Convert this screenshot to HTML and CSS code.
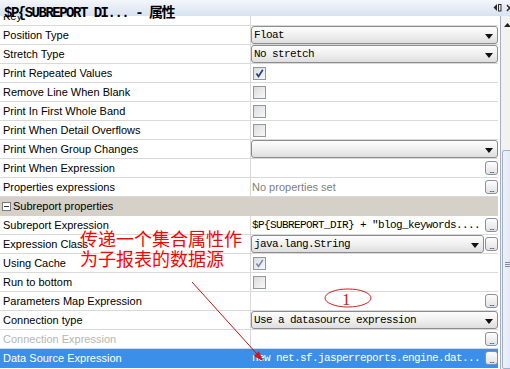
FILE: index.html
```html
<!DOCTYPE html>
<html>
<head>
<meta charset="utf-8">
<link rel="stylesheet" href="styles.css">
</head>
<body>
<div class="panel">
  <div class="titlebar">
    <span class="title">$P{SUBREPORT DI... - 属性</span>
    <svg class="tb-icons" width="20" height="10" viewBox="0 0 20 10">
      <polygon points="4,1 0.5,4.5 4,8" fill="#2b2b2b"/>
      <rect x="5.5" y="1.5" width="2.5" height="6.5" fill="none" stroke="#2b2b2b" stroke-width="1"/>
      <path d="M14 2 L19 8 M19 2 L14 8" stroke="#2b2b2b" stroke-width="1.4"/>
    </svg>
  </div>
  <div class="content">
    <div class="sheet">
      <div class="row"><div class="name">Key</div><div class="val"></div></div>
      <div class="row"><div class="name">Position Type</div><div class="val"><div class="combo"><span class="mono">Float</span><span class="drop"></span></div></div></div>
      <div class="row"><div class="name">Stretch Type</div><div class="val"><div class="combo"><span class="mono">No stretch</span><span class="drop"></span></div></div></div>
      <div class="row"><div class="name">Print Repeated Values</div><div class="val"><span class="cb checked"><svg width="11" height="11" viewBox="0 0 11 11"><path d="M2.5 5.5 L4.5 8.5 L8.8 1.8" fill="none" stroke="#23407d" stroke-width="1.7"/></svg></span></div></div>
      <div class="row"><div class="name">Remove Line When Blank</div><div class="val"><span class="cb"></span></div></div>
      <div class="row"><div class="name">Print In First Whole Band</div><div class="val"><span class="cb"></span></div></div>
      <div class="row"><div class="name">Print When Detail Overflows</div><div class="val"><span class="cb"></span></div></div>
      <div class="row"><div class="name">Print When Group Changes</div><div class="val"><div class="combo"><span class="mono"></span><span class="drop"></span></div></div></div>
      <div class="row"><div class="name">Print When Expression</div><div class="val"><span class="txt"></span><span class="ell">...</span></div></div>
      <div class="row"><div class="name">Properties expressions</div><div class="val"><span class="txt muted">No properties set</span><span class="ell">...</span></div></div>
      <div class="row cat"><span class="minus"></span>Subreport properties</div>
      <div class="row"><div class="name">Subreport Expression</div><div class="val"><span class="txt mono">$P{SUBREPORT_DIR} + "blog_keywords....</span><span class="ell">...</span></div></div>
      <div class="row"><div class="name">Expression Class</div><div class="val"><div class="combo short"><span class="mono">java.lang.String</span><span class="drop"></span></div><span class="ell">...</span></div></div>
      <div class="row"><div class="name">Using Cache</div><div class="val"><span class="cb checked"><svg width="11" height="11" viewBox="0 0 11 11"><path d="M2.5 5.5 L4.5 8.5 L8.8 1.8" fill="none" stroke="#6f86b8" stroke-width="1.5"/></svg></span></div></div>
      <div class="row"><div class="name">Run to bottom</div><div class="val"><span class="cb"></span></div></div>
      <div class="row"><div class="name">Parameters Map Expression</div><div class="val"><span class="txt"></span><span class="ell">...</span></div></div>
      <div class="row"><div class="name">Connection type</div><div class="val"><div class="combo"><span class="mono">Use a datasource expression</span><span class="drop"></span></div></div></div>
      <div class="row"><div class="name disabled">Connection Expression</div><div class="val"><span class="txt"></span><span class="ell">...</span></div></div>
      <div class="row sel"><div class="name">Data Source Expression</div><div class="val"><span class="txt mono">new net.sf.jasperreports.engine.dat...</span><span class="ell">...</span></div></div>
      <div class="row"><div class="name"></div><div class="val"><span class="txt"></span><span class="ell">...</span></div></div>
    </div>
    <div class="vscroll">
      <div class="up"><svg width="7" height="4" viewBox="0 0 7 4"><polygon points="0,4 3.5,0 7,4" fill="#222"/></svg></div>
      <div class="thumb"><span class="grip"></span></div>
    </div>
  </div>
  <div class="note">传递一个集合属性作<br>为子报表的数据源</div>
  <svg class="marks" width="510" height="369" viewBox="0 0 510 369">
    <ellipse cx="348" cy="298" rx="23" ry="9" fill="none" stroke="#d42020" stroke-width="1"/>
    <text x="342" y="305" class="mark-num">1</text>
    <line x1="192" y1="282" x2="257" y2="354" stroke="#c81010" stroke-width="1"/>
    <polygon points="263,361 253.7,355.9 258.9,351.3" fill="#e01010"/>
  </svg>
</div>
</body>
</html>
```
FILE: styles.css
```css
body {
  margin: 0;
}
.panel {
  width: 510px;
  height: 369px;
  overflow: hidden;
  position: relative;
  background: #fff;
  font-family: "Liberation Sans", Arial, sans-serif;
  font-size: 11px;
  color: #000;
}
.titlebar {
  height: 16px;
  background: linear-gradient(#f3f6fb, #d8e2f0);
  position: relative;
  z-index: 1;
  display: flex;
  justify-content: space-between;
  align-items: flex-start;
}
.title {
  font-family: "Liberation Mono", "Noto Sans CJK SC", monospace;
  font-weight: bold;
  font-size: 14px;
  letter-spacing: -1.5px;
  line-height: 14px;
  padding: 6px 0 0 4px;
  white-space: nowrap;
}
.tb-icons {
  margin-top: 3px;
  margin-right: -3px;
  flex: none;
}
.content {
  display: flex;
  height: 353px;
  overflow: hidden;
}
.sheet {
  width: 498px;
  flex: none;
  margin-top: -9px;
  margin-right: 2px;
}
.row {
  display: grid;
  grid-template-columns: 251px 1fr;
  height: 18px;
  border-bottom: 1px solid #d9d9d9;
}
.name {
  box-sizing: border-box;
  border-right: 1px solid #d9d9d9;
  padding: 1px 0 0 3px;
  line-height: 17px;
  white-space: nowrap;
  overflow: hidden;
}
.name.disabled {
  color: #b5b5b5;
}
.val {
  display: flex;
  align-items: center;
  min-width: 0;
  white-space: nowrap;
}
.txt {
  flex: 1;
  min-width: 0;
  overflow: hidden;
  padding-left: 1px;
  line-height: 18px;
}
.muted {
  color: #808080;
}
.mono {
  font-family: "Liberation Mono", "Noto Sans CJK SC", monospace;
  font-size: 11px;
  letter-spacing: -0.6px;
}
.combo {
  box-sizing: border-box;
  flex: 1;
  height: 18px;
  border: 1px solid #8c8c8c;
  border-radius: 3px;
  background: linear-gradient(#fdfdfd, #f0f0f0 50%, #dedede);
  display: flex;
  align-items: center;
  justify-content: space-between;
  padding: 0 4px 0 2px;
  line-height: 16px;
}
.combo.short {
  flex: none;
  width: 233px;
  margin-right: 1px;
}
.drop {
  width: 0;
  height: 0;
  border-left: 4px solid transparent;
  border-right: 4px solid transparent;
  border-top: 5px solid #111;
  margin-top: 2px;
}
.ell {
  box-sizing: border-box;
  flex: none;
  width: 13px;
  height: 14px;
  border: 1px solid #8790a0;
  border-radius: 3px;
  background: linear-gradient(#fdfdfd, #e2e2e2);
  font-size: 9px;
  line-height: 16px;
  text-align: center;
  letter-spacing: -1px;
  color: #333;
  overflow: hidden;
  margin-left: auto;
}
.cb {
  box-sizing: border-box;
  width: 13px;
  height: 13px;
  border: 1px solid #8e97a6;
  background: linear-gradient(135deg, #dcdcdc, #f8f8f8);
  margin-left: 2px;
  display: flex;
}
.cb svg {
  display: block;
}
.row.cat {
  display: flex;
  align-items: center;
  background: #d5d1c9;
  border-bottom-color: #d5d1c9;
  line-height: 18px;
}
.minus {
  box-sizing: border-box;
  width: 9px;
  height: 9px;
  border: 1px solid #7a7a7a;
  background: #fff;
  margin: 0 2px 0 2px;
  position: relative;
}
.minus::after {
  content: "";
  position: absolute;
  left: 1px;
  right: 1px;
  top: 3px;
  height: 1px;
  background: #333;
}
.row.sel {
  background: #3b8fe8;
  color: #fff;
  border-bottom-color: #3b8fe8;
}
.row.sel .name {
  border-right-color: #3b8fe8;
}
.vscroll {
  box-sizing: border-box;
  width: 17px;
  flex: none;
  border-left: 1px solid #a7b0be;
  background: #f2f2f2;
  display: flex;
  flex-direction: column;
}
.up {
  height: 17px;
  display: flex;
  justify-content: center;
  align-items: center;
  margin-left: -3px;
}
.thumb {
  flex: 1;
  margin: 117px 0 0 1px;
  border: 1px solid #9fb0ca;
  border-radius: 2px;
  background: linear-gradient(90deg, #eef2f8, #d9e3f0);
}
.grip {
  display: block;
  width: 5px;
  height: 5px;
  margin: 111px 0 0 2px;
  background: repeating-linear-gradient(#7d8ca3 0 1px, transparent 1px 2px);
}
.note {
  position: absolute;
  left: 80px;
  top: 228px;
  color: #f00;
  font-family: "Noto Sans CJK SC", sans-serif;
  font-size: 18px;
  line-height: 20px;
}
.marks {
  position: absolute;
  left: 0;
  top: 0;
  pointer-events: none;
}
.mark-num {
  font-family: "Liberation Serif", serif;
  font-size: 17px;
  fill: #d42020;
}
```
